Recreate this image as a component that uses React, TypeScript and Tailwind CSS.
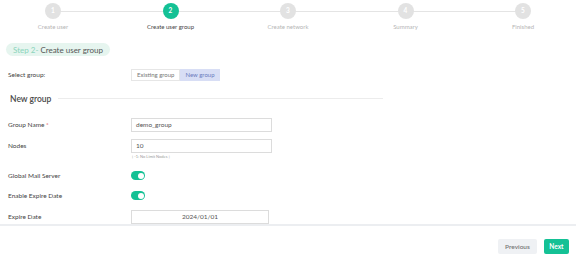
import React from 'react';

const steps = ['Create user', 'Create user group', 'Create network', 'Summary', 'Finished'];

function Stepper({ current }: { current: number }) {
  return (
    <div className="relative px-[45px] pt-[3px]">
      {/* connecting line */}
      <div className="absolute left-[53px] right-[53px] top-[11px] h-px bg-[#e4e4e4]" />
      <div className="relative flex justify-between">
        {steps.map((label, i) => {
          const active = i === current;
          return (
            <div key={label} className="flex w-4 flex-col items-center">
              <div
                className={
                  active
                    ? 'flex h-4 w-4 items-center justify-center rounded-full bg-[#14c195] text-[6.5px] font-bold text-white'
                    : 'flex h-4 w-4 items-center justify-center rounded-full bg-[#e2e2e2] text-[6.5px] font-bold text-white'
                }
              >
                {i + 1}
              </div>
              <div
                className={
                  active
                    ? 'mt-[5px] whitespace-nowrap text-[6px] leading-none text-[#444]'
                    : 'mt-[5px] whitespace-nowrap text-[6px] leading-none text-[#b5b5b5]'
                }
              >
                {label}
              </div>
            </div>
          );
        })}
      </div>
    </div>
  );
}

function Toggle() {
  return (
    <div className="flex h-[9px] w-[14px] items-center justify-end rounded-full bg-[#14c195] pr-[1.5px]">
      <div className="h-[6px] w-[6px] rounded-full bg-white" />
    </div>
  );
}

function Row({ label, children, className }: { label: React.ReactNode; children: React.ReactNode; className?: string }) {
  return (
    <div className={'flex items-center ' + (className ?? '')}>
      <div className="w-[131px] pl-[8px] text-[6.5px] text-[#444]">{label}</div>
      <div>{children}</div>
    </div>
  );
}

export default function App() {
  return (
    <div
      className="h-[263px] w-[576px] overflow-hidden bg-white"
      style={{ fontFamily: 'Lato, "Liberation Sans", sans-serif' }}
    >
      <div className="h-[226px] border-b-2 border-[#eceef1]">
        <Stepper current={1} />

        <div className="ml-[6px] mt-[13px] inline-flex h-[13px] items-center rounded-full bg-[#e6f5ef] px-[7px] text-[8px] leading-none">
          <span className="text-[#8ad4bb]">Step 2-</span>
          <span className="ml-[2px] text-[#555]">Create user group</span>
        </div>

        <Row label="Select group:" className="mt-[10px]">
          <div className="flex h-[12px] text-[6px] leading-none">
            <div className="flex items-center border border-[#e6e6e6] bg-white px-[5px] text-[#777]">Existing group</div>
            <div className="flex items-center bg-[#d8def5] px-[5px] text-[#6b7bbd]">New group</div>
          </div>
        </Row>

        <div className="mt-[14px] flex items-center pl-[10px]">
          <span className="text-[8.5px] font-semibold leading-none text-[#4a4a4a]">New group</span>
          <div className="ml-[7px] h-px w-[325px] bg-[#ececec]" />
        </div>

        <Row label={<>Group Name <span className="text-[#e25555]">*</span></>} className="mt-[15px]">
          <div className="flex h-[14px] w-[141px] items-center border border-[#dcdcdc] px-[4px] text-[6.5px] text-[#555]">
            demo_group
          </div>
        </Row>

        <Row label="Nodes" className="mt-[7px]">
          <div className="flex h-[14px] w-[141px] items-center border border-[#dcdcdc] px-[4px] text-[6.5px] text-[#555]">
            10
          </div>
        </Row>
        <div className="ml-[132px] mt-[2px] text-[4px] leading-none text-[#999]">[ -1: No Limit Nodes ]</div>

        <Row label="Global Mail Server" className="mt-[12px]">
          <Toggle />
        </Row>

        <Row label="Enable Expire Date" className="mt-[10px]">
          <Toggle />
        </Row>

        <Row label="Expire Date" className="mt-[9px]">
          <div className="flex h-[14px] w-[138px] items-center justify-center border border-[#dcdcdc] text-[6.5px] text-[#555]">
            2024/01/01
          </div>
        </Row>
      </div>

      <div className="flex justify-end gap-[7px] pr-[7px] pt-[13px]">
        <button className="h-[15px] rounded-[2px] bg-[#eff1f4] px-[7px] text-[6.5px] font-semibold text-[#777]">Previous</button>
        <button className="h-[15px] rounded-[2px] bg-[#14c195] px-[5.5px] text-[6.5px] font-bold text-white">Next</button>
      </div>
    </div>
  );
}
